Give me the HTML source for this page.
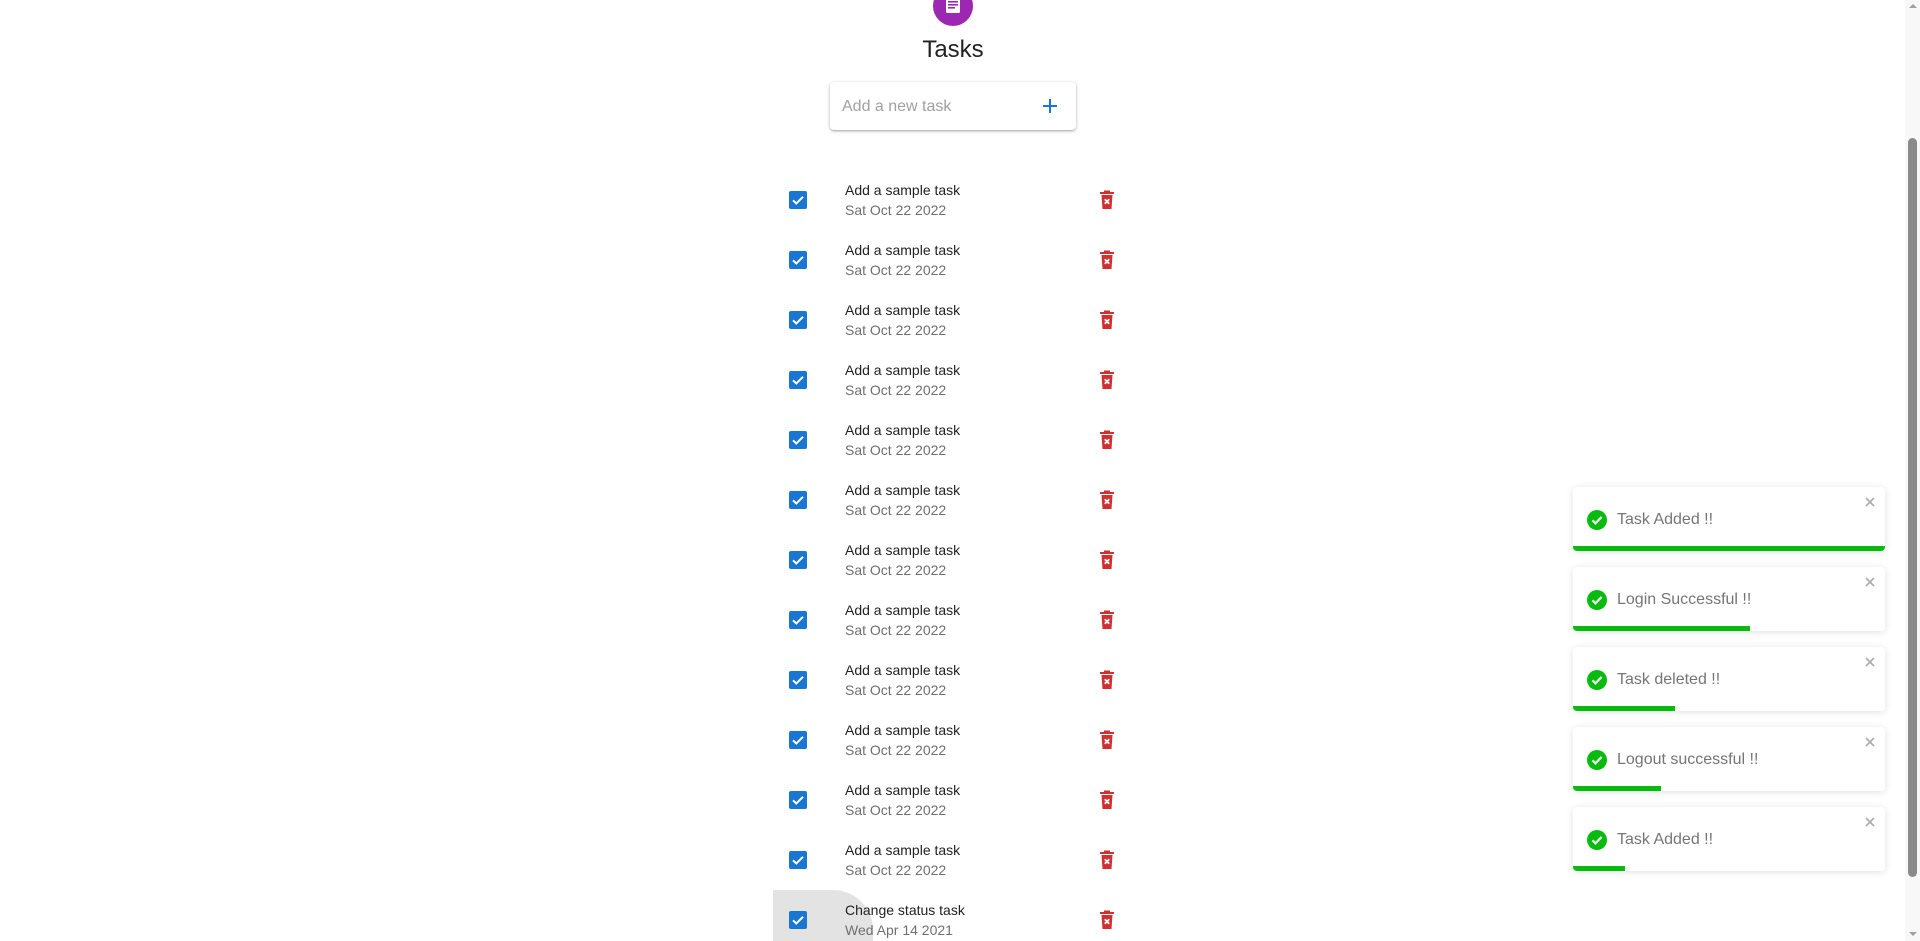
<!DOCTYPE html>
<html><head><meta charset="utf-8"><style>
*{box-sizing:border-box;margin:0;padding:0}
html,body{width:1920px;height:941px;overflow:hidden;background:#fff;font-family:"Liberation Sans",sans-serif;}
.abs{position:absolute}
.logo{left:933px;top:-14px;width:40px;height:40px;border-radius:50%;background:#9c27b0}
.title{left:0;width:1906px;top:36px;text-align:center;font-size:24px;color:#222}
.card{left:830px;top:82px;width:246px;height:48px;border-radius:4px;box-shadow:0 1px 3px rgba(0,0,0,.3),0 1px 1px rgba(0,0,0,.1);background:#fff}
.ph{left:842px;top:98px;font-size:16px;color:#a0a0a0}
.cb{width:18px;height:18px;background:#1976d2;border-radius:2px;left:789px}
.t1{left:845px;font-size:14px;color:#222}
.t2{left:845px;font-size:14px;color:#6f6f6f}
.tr{left:1098px}
.toast{left:1573px;width:312px;height:64px;background:#fff;border-radius:4px;box-shadow:0 1px 8px rgba(0,0,0,.12);overflow:hidden}
.toast .msg{position:absolute;left:44px;top:24px;font-size:16px;color:#757575}
.toast .ic{position:absolute;left:14px;top:23px}
.toast .x{position:absolute;right:8px;top:8px;color:#aaa;font-size:16px}
.toast .bar{position:absolute;left:0;bottom:0;height:5px;background:#07bc0c}
</style></head><body>
<div class="abs logo"><svg width="40" height="40" viewBox="0 0 40 40" style="position:absolute;left:0;top:0"><rect x="13" y="12" width="14" height="15" rx="1.5" fill="#fff"/><rect x="15" y="15" width="10" height="1.6" fill="#9c27b0"/><rect x="15" y="18" width="10" height="1.6" fill="#9c27b0"/><rect x="15" y="21" width="7" height="1.6" fill="#9c27b0"/></svg></div>
<div class="abs title">Tasks</div>
<div class="abs card"></div>
<div class="abs ph">Add a new task</div>
<svg class="abs" style="left:1041px;top:97px" width="18" height="18" viewBox="0 0 18 18"><path d="M9 2v14M2 9h14" stroke="#1976d2" stroke-width="2"/></svg>
<div class="abs" style="left:773px;top:890px;width:100px;height:51px;background:#e3e3e3;border-radius:0 40px 0 0"></div>
<div id="rows"></div>
<script>
var h='';
for(var i=0;i<13;i++){var y=191+i*60;var last=i==12;
h+='<div class="abs cb" style="top:'+y+'px"><svg width="18" height="18" viewBox="0 0 18 18"><path d="M4 9.3l3.3 3.2L14 5.8" stroke="#fff" stroke-width="2" fill="none"/></svg></div>';
h+='<div class="abs t1" style="top:'+(y-9)+'px">'+(last?'Change status task':'Add a sample task')+'</div>';
h+='<div class="abs t2" style="top:'+(y+11)+'px">'+(last?'Wed Apr 14 2021':'Sat Oct 22 2022')+'</div>';
h+='<svg class="abs tr" style="top:'+(y-1)+'px" width="18" height="20" viewBox="0 0 18 20"><rect x="2" y="2" width="14" height="2" fill="#d32f2f"/><rect x="6" y="0.5" width="6" height="2" fill="#d32f2f"/><path d="M3.5 5h11l-1 14h-9z" fill="#d32f2f"/><path d="M6.8 9.3l4.4 4.4M11.2 9.3l-4.4 4.4" stroke="#fff" stroke-width="1.8"/></svg>';}
var t=[['Task Added !!',312],['Login Successful !!',177],['Task deleted !!',102],['Logout successful !!',88],['Task Added !!',52]];
for(var j=0;j<5;j++){h+='<div class="abs toast" style="top:'+(487+j*80)+'px"><svg class="ic" width="20" height="20" viewBox="0 0 20 20"><circle cx="10" cy="10" r="10" fill="#07bc0c"/><path d="M5.5 10.3l3 3 6-6.3" stroke="#fff" stroke-width="2.2" fill="none"/></svg><div class="msg">'+t[j][0]+'</div><svg class="x" width="14" height="14" viewBox="0 0 14 14"><path d="M3 3l8 8M11 3l-8 8" stroke="#aaa" stroke-width="1.6"/></svg><div class="bar" style="width:'+t[j][1]+'px"></div></div>';}
document.getElementById('rows').innerHTML=h;
</script>
<div class="abs" style="left:1905px;top:0;width:15px;height:941px;background:#f8f8f8"></div>
<div class="abs" style="left:1908px;top:138px;width:9px;height:739px;background:#8a8a8a;border-radius:5px"></div>
<div class="abs" style="left:1909px;top:4px;width:0;height:0;border-left:4px solid transparent;border-right:4px solid transparent;border-bottom:4px solid #a0a0a0"></div>
<div class="abs" style="left:1909px;top:932px;width:0;height:0;border-left:4px solid transparent;border-right:4px solid transparent;border-top:4px solid #a0a0a0"></div>
</body></html>
